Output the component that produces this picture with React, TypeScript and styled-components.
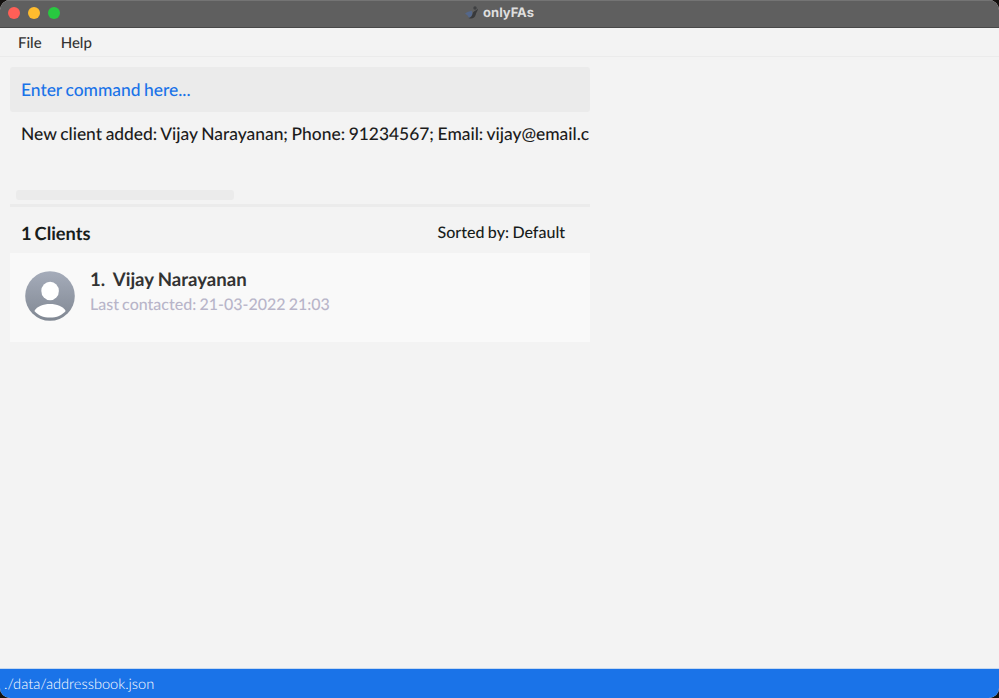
import React from "react";
import styled, { createGlobalStyle } from "styled-components";

const GlobalStyle = createGlobalStyle`
  *, *::before, *::after { box-sizing: border-box; }
  html, body { margin: 0; padding: 0; overflow: hidden; background: #14110f; }
  body { font-family: Lato, "Open Sans", sans-serif; text-rendering: geometricPrecision; }
`;

const Window = styled.div`
  display: flex;
  flex-direction: column;
  width: 999px;
  height: 698px;
  overflow: hidden;
  background: #f3f3f3;
  border-radius: 10px;
`;

const TitleBar = styled.header`
  display: grid;
  grid-template-columns: 1fr auto 1fr;
  align-items: center;
  flex: none;
  height: 28px;
  padding: 0 8px 1px;
  background: #5f5f5f;
  border-bottom: 1px solid #484848;
  box-shadow: inset 0 1px 0 #747474;
`;

const WindowControls = styled.div`
  display: flex;
  gap: 8px;
`;

const ControlDot = styled.span<{ $color: string }>`
  width: 12px;
  height: 12px;
  border-radius: 50%;
  background: ${(p) => p.$color};
`;

const Title = styled.div`
  display: flex;
  align-items: center;
  gap: 4px;
  color: #dedede;
  font: 700 13px/16px Inter, sans-serif;
`;

const MenuBar = styled.nav`
  display: flex;
  flex: none;
  gap: 19px;
  height: 29px;
  padding-left: 18px;
  border-bottom: 1px solid #ebebeb;
`;

const MenuItem = styled.span`
  color: #333;
  font-size: 15px;
  font-weight: 500;
  line-height: 30px;
`;

const Content = styled.main`
  display: flex;
  flex-direction: column;
  flex: 1;
  width: 590px;
  padding: 10px 0 0 10px;
`;

const CommandInput = styled.div`
  flex: none;
  height: 45px;
  padding-left: 11px;
  border-radius: 3px;
  background: #ebebeb;
  color: #1a73e8;
  font-size: 17.4px;
  font-weight: 500;
  line-height: 45px;
  word-spacing: -0.8px;
`;

const Result = styled.section`
  display: flex;
  flex-direction: column;
  flex: none;
  justify-content: space-between;
  height: 95px;
  padding: 9px 0 4px;
  border-bottom: 3px solid #ebebeb;
`;

const ResultText = styled.p`
  margin: 0;
  padding-left: 11px;
  white-space: nowrap;
  color: #1c1c1c;
  font-size: 17.4px;
  font-weight: 500;
  line-height: 26px;
  word-spacing: -0.75px;
`;

const ScrollThumb = styled.div`
  width: 218px;
  height: 10px;
  margin-left: 6px;
  border-radius: 3px;
  background: #ebebeb;
`;

const ListHeader = styled.div`
  display: flex;
  flex: none;
  justify-content: space-between;
  height: 46px;
  padding: 0 25px 0 11px;
  color: #181d1b;
`;

const ClientCount = styled.h1`
  margin: 0;
  font-size: 18.3px;
  font-weight: 700;
  line-height: 52px;
  word-spacing: -1.5px;
`;

const SortLabel = styled.span`
  font-size: 16px;
  font-weight: 500;
  line-height: 52px;
  word-spacing: -0.6px;
`;

const ClientCard = styled.article`
  display: flex;
  flex: none;
  gap: 15px;
  height: 89px;
  padding: 13px 15px;
  background: #f9f9f9;
`;

const ClientDetails = styled.div`
  display: flex;
  flex-direction: column;
  white-space: pre;
`;

const ClientName = styled.strong`
  color: #333;
  font-size: 18.6px;
  font-weight: 700;
  line-height: 26px;
  word-spacing: -0.4px;
`;

const LastContacted = styled.span`
  color: #b8b5c9;
  font-size: 16px;
  font-weight: 500;
  line-height: 26px;
  word-spacing: -0.9px;
`;

const StatusBar = styled.footer`
  flex: none;
  height: 30px;
  padding-left: 4px;
  border-top: 1px solid #c5d8ef;
  background: #1a73e8;
  color: #fff;
  font-size: 14.6px;
  font-weight: 300;
  line-height: 31px;
`;

const AppLogo = () => (
  <svg width="14" height="14" viewBox="0 0 14 14">
    <path d="M0 7.6 2.5 6 6.8 4.8 7.6 8.8 4.2 12 2.6 9.4Z" fill="#54678a" />
    <path d="M3.4 12C6.8 11.2 7.2 9 8 6.4 9 4.6 11.2 4.8 13 2.4 12.8 5 11 6.2 10.8 8.4 9.8 11.8 7.2 13.4 3.4 12Z" fill="#38393b" />
    <circle cx="10" cy="2" r="1.7" fill="#3f4042" />
  </svg>
);

const AvatarIcon = styled.svg`
  flex: none;
  width: 50px;
  height: 50px;
  margin-top: 5px;
`;

const Avatar = () => (
  <AvatarIcon viewBox="0 0 50 50">
    <defs>
      <linearGradient id="avatar-fill" x1="0" y1="0" x2="0" y2="1">
        <stop offset="0" stopColor="#a5acba" />
        <stop offset="1" stopColor="#818893" />
      </linearGradient>
    </defs>
    <circle cx="25" cy="25" r="24.8" fill="url(#avatar-fill)" />
    <ellipse cx="25.1" cy="20" rx="8.8" ry="9.3" fill="#fff" />
    <path d="M9.4 39.9C12.3 35.2 18 33 25 33S37.8 35.2 40.7 39.9C37 44.2 31.7 46.5 25 46.5S13 44.2 9.4 39.9Z" fill="#fff" />
  </AvatarIcon>
);

const controls = ["#ff5f57", "#febc2e", "#28c840"];

export default function App() {
  return (
    <>
      <GlobalStyle />
      <Window>
        <TitleBar>
          <WindowControls>
            {controls.map((color) => (
              <ControlDot key={color} $color={color} />
            ))}
          </WindowControls>
          <Title>
            <AppLogo />
            onlyFAs
          </Title>
        </TitleBar>
        <MenuBar>
          <MenuItem>File</MenuItem>
          <MenuItem>Help</MenuItem>
        </MenuBar>
        <Content>
          <CommandInput>Enter command here...</CommandInput>
          <Result>
            <ResultText>
              New client added: Vijay Narayanan; Phone: 91234567; Email: vijay@email.c
            </ResultText>
            <ScrollThumb />
          </Result>
          <ListHeader>
            <ClientCount>1 Clients</ClientCount>
            <SortLabel>Sorted by: Default</SortLabel>
          </ListHeader>
          <ClientCard>
            <Avatar />
            <ClientDetails>
              <ClientName>{"1.  Vijay Narayanan"}</ClientName>
              <LastContacted>Last contacted: 21-03-2022 21:03</LastContacted>
            </ClientDetails>
          </ClientCard>
        </Content>
        <StatusBar>./data/addressbook.json</StatusBar>
      </Window>
    </>
  );
}
